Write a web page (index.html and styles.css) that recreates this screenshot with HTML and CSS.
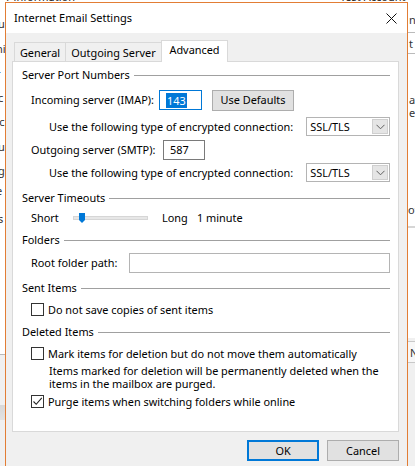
FILE: index.html
```html
<!DOCTYPE html>
<html>
<head>
<meta charset="utf-8">
<link rel="stylesheet" href="styles.css">
</head>
<body>
<div class="desktop">
  <div class="frag frag-top-l">er information</div>
  <div class="frag frag-top-r">Test Account S</div>
  <div class="leftstrip">
    <span>u</span><span>ni</span><span>r</span><span>c</span><span>cc</span><span>u</span><span>g</span><span>e</span><span>s</span>
  </div>
  <div class="rightstrip">
    <div class="rs-a">nc</div>
    <div class="rs-box">t</div>
    <div class="rs-c">at</div>
    <div class="rs-c2">ec</div>
    <div class="rs-d">of</div>
    <div class="rs-low"><div class="rs-box2">N</div></div>
  </div>
  <div class="window">
    <div class="titlebar">
      <span class="title">Internet Email Settings</span>
      <svg class="close" width="11" height="11" viewBox="0 0 11 11"><path d="M0.5 0.5 L10.5 10.5 M10.5 0.5 L0.5 10.5" stroke="#111" stroke-width="1" fill="none"/></svg>
    </div>
    <div class="body">
      <div class="tabs">
        <div class="tab tab-general">General</div>
        <div class="tab tab-outgoing">Outgoing Server</div>
        <div class="tab tab-advanced active">Advanced</div>
      </div>
      <div class="panel">
        <div class="group-head"><span>Server Port Numbers</span><i></i></div>
        <div class="row r-incoming">
          <span class="lbl lbl-in">Incoming server (IMAP):</span>
          <div class="input focus w42"><span class="sel">143</span></div>
          <div class="btn btn-defaults">Use Defaults</div>
        </div>
        <div class="row r-enc1">
          <span class="lbl lbl-enc">Use the following type of encrypted connection:</span>
          <div class="select"><span class="val">SSL/TLS</span><span class="drop"><svg width="9" height="6" viewBox="0 0 9 6"><path d="M0.5 0.8 L4.5 4.8 L8.5 0.8" stroke="#606060" fill="none" stroke-width="1"/></svg></span></div>
        </div>
        <div class="row r-outgoing">
          <span class="lbl lbl-out">Outgoing server (SMTP):</span>
          <div class="input dark w41"><span class="txt">587</span></div>
        </div>
        <div class="row r-enc2">
          <span class="lbl lbl-enc">Use the following type of encrypted connection:</span>
          <div class="select"><span class="val">SSL/TLS</span><span class="drop"><svg width="9" height="6" viewBox="0 0 9 6"><path d="M0.5 0.8 L4.5 4.8 L8.5 0.8" stroke="#606060" fill="none" stroke-width="1"/></svg></span></div>
        </div>

        <div class="group-head g-timeouts"><span>Server Timeouts</span><i></i></div>
        <div class="row r-slider">
          <span class="lbl lbl-short">Short</span>
          <div class="slider">
            <div class="track"></div>
            <svg class="thumb" width="6" height="10" viewBox="0 0 6 10"><path d="M0 0 H6 V7 L3 10 L0 7 Z" fill="#0078d7"/></svg>
          </div>
          <span class="lbl lbl-long">Long</span>
          <span class="lbl">1 minute</span>
        </div>

        <div class="group-head g-folders"><span>Folders</span><i></i></div>
        <div class="row r-root">
          <span class="lbl lbl-root">Root folder path:</span>
          <div class="input light grow"></div>
        </div>

        <div class="group-head g-sent"><span>Sent Items</span><i></i></div>
        <div class="row r-check r-nosave">
          <span class="cb"></span><span>Do not save copies of sent items</span>
        </div>

        <div class="group-head g-deleted"><span>Deleted Items</span><i></i></div>
        <div class="row r-check r-mark">
          <span class="cb"></span><span>Mark items for deletion but do not move them automatically</span>
        </div>
        <p class="note">Items marked for deletion will be permanently deleted when the items in the mailbox are purged.</p>
        <div class="row r-check r-purge">
          <span class="cb checked"><svg width="11" height="11" viewBox="0 0 11 11"><path d="M1.5 5.5 L4.2 8.3 L9.8 1.8" stroke="#222" stroke-width="1.1" fill="none"/></svg></span><span>Purge items when switching folders while online</span>
        </div>
      </div>
      <div class="buttons">
        <div class="btn btn-ok">OK</div>
        <div class="btn btn-cancel">Cancel</div>
      </div>
    </div>
  </div>
</div>
</body>
</html>
```
FILE: styles.css
```css
* { box-sizing: border-box; }
html, body { margin: 0; padding: 0; }
body {
  width: 415px;
  height: 466px;
  overflow: hidden;
  font-family: "Noto Sans", sans-serif;
  font-size: 10.9px;
  color: #000;
}
.desktop {
  position: relative;
  width: 415px;
  height: 466px;
  background: #ffffff;
  overflow: hidden;
}
.frag { position: absolute; font-size: 11px; color: #222; white-space: nowrap; }
.frag-top-l { left: 0; top: -11px; }
.frag-top-r { left: 340px; top: -11px; }

.leftstrip {
  position: absolute; left: 0; top: 0; width: 6px; height: 466px;
  background: linear-gradient(#fff 0, #fff 354px, #b9b9b9 354px, #b9b9b9 355px, #f0f0f0 355px, #f0f0f0 405px, #d8d8d8 405px, #e2e2e2 420px, #f0f0f0 420px);
  overflow: hidden;
}
.leftstrip span { position: absolute; left: -2px; font-size: 11px; color: #333; }
.leftstrip span:nth-child(1) { top: 16px; }
.leftstrip span:nth-child(2) { top: 41px; left: -4px; }
.leftstrip span:nth-child(3) { top: 66px; left: -4px; }
.leftstrip span:nth-child(4) { top: 90px; }
.leftstrip span:nth-child(5) { top: 114px; left: -6px; }
.leftstrip span:nth-child(6) { top: 139px; }
.leftstrip span:nth-child(7) { top: 163px; }
.leftstrip span:nth-child(8) { top: 183px; left: -4px; }
.leftstrip span:nth-child(9) { top: 211px; left: -2px; }

.rightstrip {
  position: absolute; left: 408px; top: 0; width: 7px; height: 466px;
  background: #fff; overflow: hidden; font-size: 11px; color: #333;
}
.rs-a { position: absolute; left: 1px; top: 14px; line-height: 12px; }
.rs-box { position: absolute; left: 0; top: 32px; width: 10px; height: 22px; border-top: 1px solid #bbb; border-bottom: 1px solid #bbb; padding: 3px 0 0 1px; }
.rs-c { position: absolute; left: 1px; top: 94px; line-height: 12px; }
.rs-c2 { position: absolute; left: 1px; top: 107px; line-height: 12px; }
.rs-d { position: absolute; left: 0; top: 202px; }
.rs-low { position: absolute; left: 0; top: 226px; width: 10px; height: 240px; background: linear-gradient(#d6d6d6 0, #d6d6d6 2px, #fff 2px, #fff 112px, #f0f0f0 112px); }
.rs-box2 { position: absolute; left: 0; top: 115px; width: 10px; height: 22px; border-top: 1px solid #c8c8c8; border-bottom: 1px solid #c8c8c8; padding: 3px 0 0 2px; background: #f7f7f7; }

.window {
  position: absolute;
  left: 5px;
  top: 2px;
  width: 403px;
  height: 470px;
  border: 1px solid #e27d35;
  background: #f0f0f0;
  display: flex;
  flex-direction: column;
}
.titlebar {
  height: 30px;
  background: #fff;
  display: flex;
  align-items: center;
  justify-content: space-between;
  padding: 0 10px 0 8px;
  flex: none;
}
.title { font-size: 11px; line-height: 16px; }
.close { display: block; }

.body {
  padding: 7px 8px 0 6px;
}
.tabs {
  display: flex;
  align-items: flex-end;
  height: 21px;
  padding-left: 2px;
  position: relative;
  z-index: 2;
}
.tab {
  height: 19px;
  border: 1px solid #d9d9d9;
  border-bottom: none;
  background: #f0f0f0;
  text-align: center;
  line-height: 19px;
  white-space: nowrap;
}
.tab-general { width: 52px; }
.tab-outgoing { width: 97px; margin-left: -1px; }
.tab-advanced { width: 67px; margin-left: -1px; }
.tab.active {
  height: 22px;
  margin-bottom: -1px;
  background: #fff;
  line-height: 18px;
}

.panel {
  height: 371px;
  background: #fff;
  border: 1px solid #d9d9d9;
  padding: 5px 8px 0 9px;
  position: relative;
  z-index: 1;
}
.group-head {
  display: flex;
  align-items: center;
  gap: 4px;
  height: 16px;
  line-height: 16px;
  white-space: nowrap;
}
.group-head i {
  flex: 1;
  height: 1px;
  background: #a0a0a0;
  margin-top: 1px;
}
.g-timeouts { margin-top: 8px; }
.g-folders { margin-top: 6px; }
.g-sent { margin-top: 7px; }
.g-deleted { margin-top: 7px; }

.row {
  display: flex;
  align-items: center;
  white-space: nowrap;
}
.lbl { line-height: 16px; }
.r-incoming { margin-top: 7px; height: 20px; padding-left: 9px; }
.lbl-in { width: 128px; }
.r-enc1 { margin-top: 7px; height: 19px; padding-left: 27px; }
.lbl-enc { width: 258px; }
.r-outgoing { margin-top: 4px; height: 20px; padding-left: 9px; }
.lbl-out { width: 132px; }
.r-enc2 { margin-top: 3px; height: 19px; padding-left: 27px; }

.input {
  height: 20px;
  border: 1px solid #7a7a7a;
  background: #fff;
  display: flex;
  align-items: center;
  padding-left: 6px;
}
.input.focus { border-color: #0078d7; }
.input.dark { border-color: #7a7a7a; }
.input.light { border-color: #b4b4b4; height: 20px; }
.w42 { width: 43px; }
.w41 { width: 42px; }
.grow { flex: 1; }
.sel {
  background: #0078d7;
  color: #fff;
  line-height: 15px;
  padding: 0 1px;
}
.txt { line-height: 16px; }

.btn {
  height: 21px;
  background: #e1e1e1;
  border: 1px solid #adadad;
  display: flex;
  align-items: center;
  justify-content: center;
  line-height: 16px;
}
.btn-defaults { width: 82px; margin-left: 10px; }

.select {
  width: 84px;
  height: 19px;
  border: 1px solid #b4b4b4;
  background: #fff;
  display: flex;
  align-items: center;
  justify-content: space-between;
  padding: 0 1px 0 3px;
}
.select .val { line-height: 16px; }
.drop {
  width: 16px;
  height: 15px;
  background: #e5e5e5;
  border: 1px solid #cfcfcf;
  display: flex;
  align-items: center;
  justify-content: center;
}
.drop svg { display: block; }

.r-slider { margin-top: 4px; height: 16px; padding-left: 9px; }
.lbl-short { width: 42px; }
.slider {
  position: relative;
  width: 75px;
  height: 16px;
}
.track {
  position: absolute;
  left: 0; right: 0; top: 6px;
  height: 4px;
  background: #e7e7e7;
  border: 1px solid #d6d6d6;
}
.thumb { position: absolute; left: 6px; top: 3px; display: block; }
.lbl-long { margin-left: 14px; width: 35px; }

.r-root { margin-top: 5px; height: 20px; padding-left: 9px; }
.lbl-root { width: 98px; }

.r-check { height: 16px; padding-left: 9px; }
.cb {
  width: 13px;
  height: 13px;
  border: 1px solid #333;
  background: #fff;
  margin-right: 4px;
  flex: none;
  display: flex;
  align-items: center;
  justify-content: center;
}
.cb svg { display: block; }
.r-nosave { margin-top: 5px; }
.r-mark { margin-top: 5px; }
.note {
  margin: 3px 0 0 27px;
  width: 340px;
  line-height: 13px;
}
.r-purge { margin-top: 3px; }

.buttons {
  display: flex;
  justify-content: flex-end;
  gap: 8px;
  margin-top: 8px;
}
.btn-ok { width: 72px; border: 2px solid #0078d7; }
.btn-cancel { width: 72px; }
```
